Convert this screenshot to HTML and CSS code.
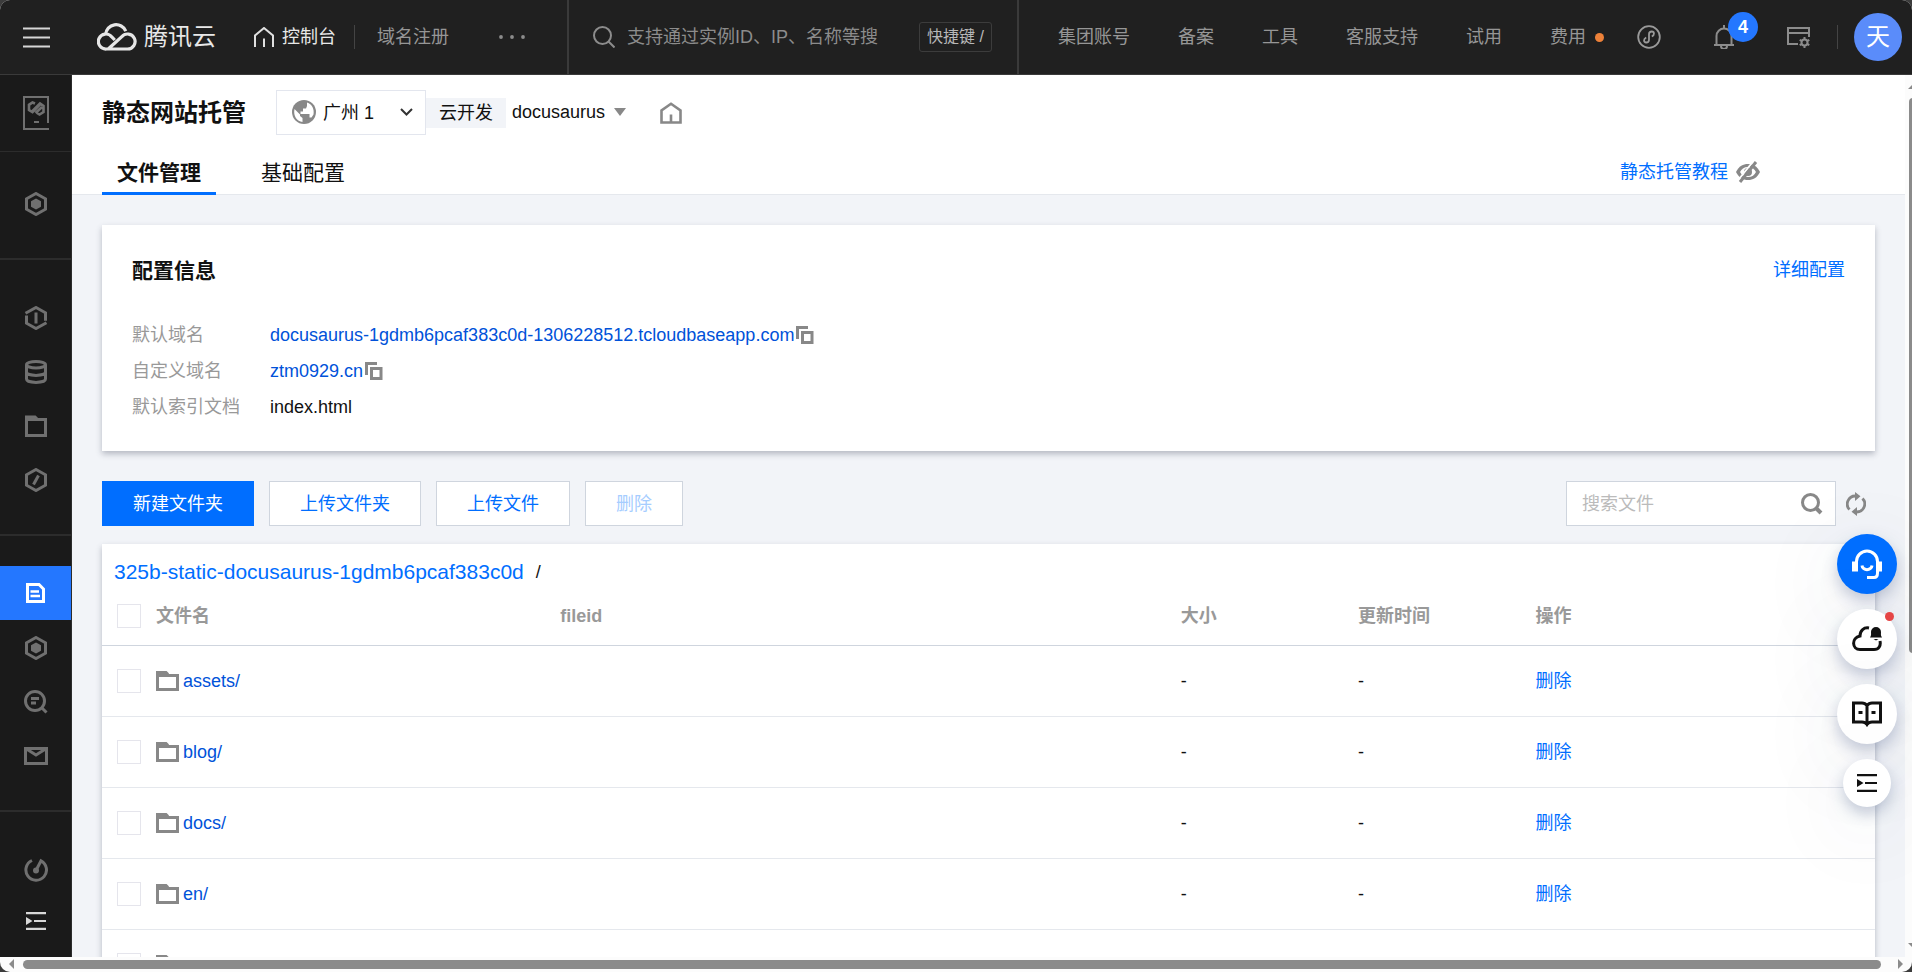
FILE: index.html
```html
<!DOCTYPE html>
<html lang="zh-CN">
<head>
<meta charset="utf-8">
<meta name="viewport" content="width=device-width, initial-scale=1">
<title>静态网站托管</title>
<link rel="stylesheet" href="styles.css">
</head>
<body>
<svg class="defs" aria-hidden="true">
  <symbol id="i-folder" viewBox="0 0 23 20"><path d="M1.500 18.500V3.500M0 1.500h10l2 2M0 3.500h11M1.500 4.500H21.500V18.500H1.500Z" fill="none" stroke="currentColor" stroke-width="3"/></symbol>
  <symbol id="i-copy" viewBox="0 0 18 18"><path d="M1.500 13V1.500H12" fill="none" stroke="currentColor" stroke-width="3"/><path d="M6.500 6.500H16V16.500H6.500Z" fill="none" stroke="currentColor" stroke-width="3"/></symbol>
  <symbol id="i-hex" viewBox="0 0 24 24"><path d="M12 1.500L21.500 6.800V17.200L12 22.500L2.500 17.200V6.800Z" fill="none" stroke="currentColor" stroke-width="3"/><path d="M12 6.500L17 9.300V14.700L12 17.500L7 14.700V9.300Z" fill="currentColor"/></symbol>
  <symbol id="i-list" viewBox="0 0 20 18"><path d="M0 1.200H20M8 9H20M0 16.800H20" fill="none" stroke="currentColor" stroke-width="2.200"/><path d="M0 5V13L6.500 9Z" fill="currentColor"/></symbol>
</svg>
<div class="window">
  <header class="topbar">
    <div class="topbar-left">
      <button class="icon-btn menu" aria-label="菜单"><svg width="27" height="21" viewBox="0 0 27 21"><path d="M0 1.500H27M0 10.500H27M0 19.500H27" stroke="#d6d6d6" stroke-width="2" fill="none"/></svg></button>
      <a class="brand" href="#">
        <svg width="40" height="28" viewBox="0 0 40 28" fill="none" stroke="#e6e6e6" stroke-width="3.200"><path d="M8.600 11.500A10.500 10.500 0 0 1 28.800 8.200"/><path d="M17.800 17L14.800 13.900A7.500 7.500 0 1 0 9.500 26H30.500A7.500 7.500 0 1 0 24.800 13.700L11.500 25.800"/></svg>
        <span>腾讯云</span>
      </a>
      <a class="console" href="#">
        <svg width="20" height="20" viewBox="0 0 20 20" fill="none" stroke="#e0e0e0" stroke-width="2"><path d="M1 20V8.500L10 1L19 8.500V20M10 11.500V20"/></svg>
        <span>控制台</span>
      </a>
      <i class="sep"></i>
      <a class="domain" href="#">域名注册</a>
      <button class="icon-btn more" aria-label="更多"><svg width="26" height="4" viewBox="0 0 26 4" fill="#8c8c8c"><circle cx="2" cy="2" r="1.900"/><circle cx="13" cy="2" r="1.900"/><circle cx="24" cy="2" r="1.900"/></svg></button>
    </div>
    <label class="topsearch">
      <svg width="22" height="22" viewBox="0 0 22 22" fill="none" stroke="#8c8c8c" stroke-width="2"><circle cx="9.500" cy="9.500" r="8.500"/><path d="M15.500 15.500L21.500 21.500"/></svg>
      <input type="text" aria-label="搜索" placeholder="支持通过实例ID、IP、名称等搜">
      <kbd>快捷键 /</kbd>
    </label>
    <nav class="topbar-right">
      <a href="#">集团账号</a><a href="#">备案</a><a href="#">工具</a><a href="#">客服支持</a><a href="#">试用</a>
      <a href="#" class="fee">费用<i></i></a>
      <div class="tools">
        <button class="icon-btn" aria-label="小程序"><svg width="24" height="24" viewBox="0 0 24 24" fill="none" stroke="#9a9a9a" stroke-width="1.800"><circle cx="12" cy="12" r="10.800"/><path d="M14.800 11.500C17.800 10 17.500 6.500 14.800 6.500C13 6.500 12 7.800 12 9.300V14.700C12 16.300 11 17.500 9.200 17.500C6.500 17.500 6.200 14 9.200 12.500"/></svg></button>
        <button class="icon-btn bell" aria-label="消息"><svg width="24" height="24" viewBox="0 0 24 24" fill="none" stroke="#8c8c8c" stroke-width="2"><path d="M2 20H22M4.500 20V11A7.500 7.500 0 0 1 19.500 11V20M12 0V4M9 21A3 3 0 0 0 15 21"/></svg><span class="badge">4</span></button>
        <button class="icon-btn" aria-label="设置"><svg width="24" height="24" viewBox="0 0 24 24" fill="none" stroke="#8c8c8c" stroke-width="2"><path d="M11 19H1V3H22V12M1 8H22"/><path d="M17.500 12V14M17.500 21V23M12.700 14.800L14.500 15.800M20.500 19.200L22.300 20.200M12.700 20.200L14.500 19.200M20.500 15.800L22.300 14.800"/><circle cx="17.500" cy="17.500" r="3"/></svg></button>
        <i class="sep"></i>
        <button class="avatar" aria-label="账号">天</button>
      </div>
    </nav>
  </header>
  <div class="body">
    <nav class="sidebar" aria-label="导航">
      <div class="group g-product">
        <a class="item" href="#" aria-label="云开发"><svg width="26" height="34" viewBox="0 0 26 34" fill="none" stroke="currentColor" stroke-width="2"><path d="M25 27V1H1V33H26M11 26H16"/><path d="M12 7.500L9.500 6.500L6 8.800V14L9.500 16.200L17 8.500M14 17L16.500 18.500L20.500 16V10L17 7.500L9.500 15M12.500 17L19 11" stroke-width="2.600"/></svg></a>
      </div>
      <div class="group g-home"><a class="item" href="#" aria-label="概览"><svg width="24" height="24"><use href="#i-hex"/></svg></a></div>
      <div class="group g-base">
        <a class="item" href="#" aria-label="环境"><svg width="24" height="24" viewBox="0 0 24 24" fill="none" stroke="currentColor" stroke-width="3"><path d="M1.500 7.300L12 1.500L21.500 6.800V14.800M2.500 9.500V17.200L12 22.500L22.500 16.700M12 6.500V17.500"/></svg></a>
        <a class="item" href="#" aria-label="数据库"><svg width="24" height="24" viewBox="0 0 24 24" fill="none" stroke="currentColor" stroke-width="3"><ellipse cx="12" cy="4.700" rx="9.500" ry="3.200"/><path d="M2.500 5V19C2.500 23.500 21.500 23.500 21.500 19V5M2.500 12C2.500 16.500 21.500 16.500 21.500 12"/></svg></a>
        <a class="item" href="#" aria-label="存储"><svg width="24" height="24" viewBox="0 0 24 24" fill="none" stroke="currentColor" stroke-width="3"><path d="M2.500 5.500H21.500V21.500H2.500ZM1 3H11L13 5"/></svg></a>
        <a class="item" href="#" aria-label="云函数"><svg width="24" height="24" viewBox="0 0 24 24" fill="none" stroke="currentColor" stroke-width="3"><path d="M12 1.500L21.500 6.800V17.200L12 22.500L2.500 17.200V6.800Z"/><path d="M14.500 7.500L9.500 16.500"/></svg></a>
      </div>
      <div class="group g-app">
        <a class="item active" href="#" aria-label="静态网站托管" aria-current="page"><svg width="24" height="24" viewBox="0 0 24 24" fill="none" stroke="currentColor" stroke-width="3"><path d="M3.500 3.500H15L19.500 8V20.500H3.500Z"/><path d="M6.500 10.500H15M6.500 15H16" stroke-width="2.600"/></svg></a>
        <a class="item" href="#" aria-label="应用"><svg width="24" height="24"><use href="#i-hex"/></svg></a>
        <a class="item" href="#" aria-label="日志"><svg width="24" height="24" viewBox="0 0 24 24" fill="none" stroke="currentColor" stroke-width="3"><circle cx="11" cy="11" r="9.500"/><path d="M17.500 17.500L22.500 22.500M7 8.500H15M7 13H12"/></svg></a>
        <a class="item" href="#" aria-label="消息"><svg width="24" height="24" viewBox="0 0 24 24" fill="none" stroke="currentColor" stroke-width="3"><path d="M1.500 4.500H22.500V19.500H1.500ZM2.500 5L12 11L21.500 5"/></svg></a>
      </div>
      <div class="group g-foot">
        <a class="item" href="#" aria-label="用量"><svg width="24" height="24" viewBox="0 0 24 24" fill="none" stroke="currentColor" stroke-width="3"><path d="M8 2.500A10.300 10.300 0 1 0 17 2.800L12 12.500"/><circle cx="12" cy="12.500" r="1.500"/></svg></a>
        <button class="item light" aria-label="展开"><svg width="20" height="18"><use href="#i-list"/></svg></button>
      </div>
    </nav>
    <main class="content">
      <div class="page-head">
        <div class="title-row">
          <h1>静态网站托管</h1>
          <div class="region">
            <svg class="globe" width="24" height="24" viewBox="0 0 24 24"><circle cx="12" cy="12" r="12" fill="#888"/><path d="M2.500 9L8 14.500V16L10.500 18V22C5 21.500 1 16 2.500 9ZM15 2.500C20 4 22.500 9 21.500 14.500L19.500 17.500H17.500V14H8.500V11.500H11V8.500H14L15 6Z" fill="#fff"/></svg>
            <select aria-label="地域"><option>广州 1</option></select>
            <svg class="chev" width="13" height="8" viewBox="0 0 13 8"><path d="M1 1L6.500 6.500L12 1" fill="none" stroke="#333" stroke-width="2"/></svg>
          </div>
          <span class="tag">云开发</span>
          <div class="env">
            <select aria-label="环境"><option>docusaurus</option></select>
            <svg width="12" height="8" viewBox="0 0 12 8"><path d="M0 0H12L6 8Z" fill="#888"/></svg>
          </div>
          <a class="home" href="#" aria-label="首页"><svg width="22" height="22" viewBox="0 0 22 22" fill="none" stroke="#888" stroke-width="2.600"><path d="M1.500 20V8.500L11 1.800L20.500 8.500V20.500H1.500ZM11 12.500V20"/></svg></a>
        </div>
        <div class="tab-row">
          <div class="tabs"><a class="tab on" href="#">文件管理</a><a class="tab" href="#">基础配置</a></div>
          <a class="guide" href="#">静态托管教程<svg width="24" height="24" viewBox="0 0 24 24"><path d="M0 12C3 6 7 4 12 4S21 6 24 12C21 18 17 20 12 20S3 18 0 12Z" fill="#888"/><path d="M4 12C5.500 9 8 7 12 7S18.500 9 20 12C18.500 15 16 17 12 17S5.500 15 4 12Z" fill="#fff"/><circle cx="12" cy="12" r="4" fill="#888"/><path d="M17.500 1L1.500 21" stroke="#fff" stroke-width="2"/><path d="M20 2L4 22" stroke="#888" stroke-width="3"/></svg></a>
        </div>
      </div>
      <div class="scroll">
        <section class="card">
          <div class="card-head"><h2>配置信息</h2><a href="#">详细配置</a></div>
          <dl class="info">
            <dt>默认域名</dt><dd><a href="#">docusaurus-1gdmb6pcaf383c0d-1306228512.tcloudbaseapp.com</a><button class="icon-btn" aria-label="复制"><svg width="18" height="18"><use href="#i-copy"/></svg></button></dd>
            <dt>自定义域名</dt><dd><a href="#">ztm0929.cn</a><button class="icon-btn" aria-label="复制"><svg width="18" height="18"><use href="#i-copy"/></svg></button></dd>
            <dt>默认索引文档</dt><dd>index.html</dd>
          </dl>
        </section>
        <div class="actions">
          <button class="btn primary">新建文件夹</button>
          <button class="btn">上传文件夹</button>
          <button class="btn">上传文件</button>
          <button class="btn" disabled>删除</button>
          <label class="filter">
            <input type="text" aria-label="搜索文件" placeholder="搜索文件">
            <svg width="22" height="22" viewBox="0 0 22 22" fill="none" stroke="#888" stroke-width="3"><circle cx="9.500" cy="9.500" r="8"/><path d="M15 15L20 20" stroke-width="4"/></svg>
          </label>
          <button class="icon-btn refresh" aria-label="刷新"><svg width="20" height="24" viewBox="0 0 20 24"><path d="M3.500 17.500A8 8 0 0 1 9.500 4M16.500 6.500A8 8 0 0 1 10.500 20" fill="none" stroke="#888" stroke-width="2.800"/><path d="M9 0L14.500 4.300L9 9ZM11 15L5.500 19.700L11 24Z" fill="#888"/></svg></button>
        </div>
        <section class="files">
          <div class="crumb"><a href="#">325b-static-docusaurus-1gdmb6pcaf383c0d</a><span>/</span></div>
          <table>
            <colgroup><col class="c-check"><col><col class="c-id"><col class="c-size"><col class="c-time"><col class="c-op"></colgroup>
            <thead><tr><th><input type="checkbox" aria-label="全选"></th><th>文件名</th><th>fileid</th><th>大小</th><th>更新时间</th><th>操作</th></tr></thead>
            <tbody>
              <tr><td><input type="checkbox" aria-label="assets/"></td><td><a class="name" href="#"><svg width="23" height="20"><use href="#i-folder"/></svg>assets/</a></td><td></td><td>-</td><td>-</td><td><a class="del" href="#">删除</a></td></tr>
              <tr><td><input type="checkbox" aria-label="blog/"></td><td><a class="name" href="#"><svg width="23" height="20"><use href="#i-folder"/></svg>blog/</a></td><td></td><td>-</td><td>-</td><td><a class="del" href="#">删除</a></td></tr>
              <tr><td><input type="checkbox" aria-label="docs/"></td><td><a class="name" href="#"><svg width="23" height="20"><use href="#i-folder"/></svg>docs/</a></td><td></td><td>-</td><td>-</td><td><a class="del" href="#">删除</a></td></tr>
              <tr><td><input type="checkbox" aria-label="en/"></td><td><a class="name" href="#"><svg width="23" height="20"><use href="#i-folder"/></svg>en/</a></td><td></td><td>-</td><td>-</td><td><a class="del" href="#">删除</a></td></tr>
              <tr><td><input type="checkbox" aria-label="文件夹"></td><td><a class="name" href="#" aria-label="文件夹"><svg width="23" height="20"><use href="#i-folder"/></svg></a></td><td></td><td></td><td></td><td></td></tr>
            </tbody>
          </table>
        </section>
      </div>
    </main>
    <div class="vbar" aria-hidden="true"><i class="up"></i><i class="thumb"></i><i class="down"></i></div>
    <div class="floaters">
      <button class="fab blue" aria-label="客服"><svg width="30" height="30" viewBox="0 0 30 30" fill="none" stroke="#fff" stroke-width="3"><path d="M4.500 22V12.500A10.500 10.500 0 0 1 25.500 12.500V24C25.500 27 24.500 28.500 22 28.500H15"/><path d="M10 16.500C10.500 22 19.500 22 20 16.500"/><path d="M0 12.500H6V22.500H0ZM24 12.500H30V22.500H24Z" fill="#fff" stroke="none"/></svg></button>
      <button class="fab" aria-label="通知"><svg width="30" height="30" viewBox="0 0 30 30" fill="none" stroke="#111" stroke-width="3"><path d="M17 4C12 3 8 6.500 8 12C-1 14 0 25.500 8 25.500H22C27 25.500 29 21.500 28 17"/><path d="M18 13.500C19.500 11.500 19 10 19 8A5 5 0 0 1 29 8C29 10 28.500 11.500 30 13.500ZM21.500 15H26.500L24 16.500Z" fill="#111" stroke="none"/></svg><i class="dot"></i></button>
      <button class="fab" aria-label="文档"><svg width="30" height="26" viewBox="0 0 30 26" fill="none" stroke="#111" stroke-width="3"><path d="M15 4.500C13.500 2.500 12 2 10 2H1.500V21H10C12.500 21 14 22 15 23.500C16 22 17.500 21 20 21H28.500V2H20C18 2 16.500 2.500 15 4.500V23M6.500 11.500H10.500M19.500 11.500H23.500"/></svg></button>
      <button class="fab small" aria-label="收起"><svg width="20" height="18"><use href="#i-list"/></svg></button>
    </div>
  </div>
  <div class="hbar" aria-hidden="true"><i class="left"></i><i class="thumb"></i><i class="right"></i></div>
</div>
</body>
</html>
```
FILE: styles.css
```css
* { box-sizing: border-box; }
body {
  margin: 0;
  background: #3c3c3c;
  color: #111;
  font: 18px/24px "Liberation Sans", "Noto Sans CJK SC", sans-serif;
}
a { color: #006eff; text-decoration: none; }
button, input, select { font: inherit; color: inherit; }
svg { display: block; flex: none; }
h1, h2, dl, dd { margin: 0; }
.defs { position: absolute; width: 0; height: 0; }
.icon-btn { display: block; padding: 0; border: 0; background: none; cursor: pointer; }
.window {
  display: flex;
  flex-direction: column;
  height: 100vh;
  overflow: hidden;
  border-radius: 10px;
  background: #fcfcfc;
}

/* top bar */
.topbar {
  display: flex;
  flex: none;
  height: 75px;
  background: #202020;
  border-bottom: 1px solid #3a3a3a;
  color: #969696;
}
.topbar a { color: inherit; white-space: nowrap; }
.topbar-left { display: flex; align-items: center; padding: 0 42px 0 23px; }
.brand { display: flex; align-items: center; gap: 7px; margin-left: 47px; font-size: 24px; }
.topbar .brand, .topbar .console { color: #e8e8e8; }
.console { display: flex; align-items: center; gap: 8px; margin: 0 18px 0 38px; }
.sep { width: 1px; height: 24px; background: #444; }
.domain { margin: 0 50px 0 22px; }
.topsearch {
  display: flex;
  flex: 1;
  align-items: center;
  min-width: 0;
  padding: 0 25px 0 24px;
  border: solid #3a3a3a;
  border-width: 0 2px;
}
.topsearch input {
  flex: 1;
  min-width: 0;
  margin: 0 12px;
  padding: 0;
  border: 0;
  outline: 0;
  background: none;
}
.topsearch input::placeholder { color: #8c8c8c; opacity: 1; }
kbd {
  flex: none;
  padding: 2px 7px;
  border: 1px solid #3c3c3c;
  border-radius: 3px;
  color: #b8b8b8;
  font: 16px/24px "Liberation Sans", "Noto Sans CJK SC", sans-serif;
}
.topbar-right { display: flex; flex: none; align-items: center; gap: 48px; padding: 0 10px 0 39px; }
.fee { display: flex; align-items: center; gap: 9px; }
.fee i { width: 9px; height: 9px; border-radius: 50%; background: #ed8139; }
.tools { display: flex; align-items: center; gap: 16px; margin-left: -15px; }
.tools .icon-btn { margin-right: 35px; }
.tools .icon-btn:nth-of-type(3) { margin-right: 10px; }
.bell { position: relative; }
.badge {
  position: absolute;
  top: -13px;
  left: 16px;
  width: 30px;
  border-radius: 15px;
  background: #2477ff;
  color: #fff;
  font: bold 18px/30px "Liberation Sans", sans-serif;
}
.avatar {
  width: 48px;
  height: 48px;
  padding: 0;
  border: 0;
  border-radius: 50%;
  background: #5a8cfa;
  color: #fff;
  font-size: 24px;
}

/* sidebar */
.body { position: relative; display: flex; flex: 1; min-height: 0; }
.sidebar {
  flex: none;
  width: 72px;
  overflow: hidden;
  background: #1a1a1a;
  border-right: 1px solid #2c2c2c;
  color: #707070;
}
.group { border-bottom: 2px solid #2c2c2c; }
.item {
  display: flex;
  align-items: center;
  justify-content: center;
  width: 100%;
  height: 54px;
  padding: 0;
  border: 0;
  background: none;
  color: inherit;
}
.g-product { padding: 11px 0; border-bottom-width: 1px; }
.g-home { padding: 25px 0 27px; }
.g-base { padding: 31px 0 27px; }
.g-app { padding: 30px 0 27px; }
.g-app .active { margin-bottom: 1px; }
.g-foot { padding: 32px 0; border: 0; }
.g-foot .item { height: 51px; }
.item.active { background: #2477ff; color: #fff; }
.item.light { color: #d8d8d8; }

/* page head */
.content { display: flex; flex: 1; flex-direction: column; min-width: 0; background: #f2f4f8; }
.page-head { flex: none; padding: 15px 30px 0; background: #fff; border-bottom: 1px solid #e5e8ed; }
.title-row { display: flex; align-items: center; height: 45px; }
h1 { font-size: 24px; line-height: 30px; white-space: nowrap; }
.region { position: relative; align-self: stretch; width: 150px; margin-left: 30px; }
.region select {
  width: 100%;
  height: 100%;
  padding: 0 0 0 46px;
  border: 1px solid #e3e6ee;
  border-radius: 0;
  background: none;
  appearance: none;
}
.globe { position: absolute; top: 10px; left: 16px; }
.chev { position: absolute; top: 18px; right: 13px; pointer-events: none; }
.tag { padding: 3px 13px; background: #f2f4f8; }
.env { display: flex; align-items: center; gap: 8px; padding: 0 0 2px 6px; }
.env select { padding: 0; border: 0; background: none; appearance: none; }
.home { margin-left: 34px; }
.tab-row { display: flex; align-items: flex-end; justify-content: space-between; padding-right: 115px; }
.tabs { display: flex; gap: 30px; margin-bottom: -1px; }
.tab {
  height: 60px;
  padding: 0 15px;
  border-bottom: 3px solid transparent;
  color: #111;
  font-size: 21px;
  line-height: 75px;
}
.tab.on { border-color: #006eff; font-weight: bold; }
.guide { display: flex; align-items: center; gap: 8px; padding-bottom: 10px; }

/* content */
.scroll { flex: 1; min-height: 0; overflow: hidden; padding: 30px; }
.card, .files { background: #fff; box-shadow: 0 3px 6px rgba(54, 58, 80, .32); }
.card { padding: 30px 30px 26px; }
.card-head { display: flex; justify-content: space-between; align-items: center; height: 30px; }
h2 { font-size: 21px; line-height: 32px; padding-top: 2px; }
.info { display: grid; grid-template-columns: 138px 1fr; padding-top: 32px; line-height: 36px; }
dt { color: #999; }
dd { display: flex; align-items: center; gap: 2px; color: #111; }
dd a, .name { color: #0052d9; }
dd .icon-btn { color: #888; }
.actions { display: flex; align-items: center; gap: 15px; padding: 30px 9px 18px 0; }
.btn {
  height: 45px;
  padding: 0 30px;
  border: 1px solid #cfd5de;
  background: #fff;
  color: #006eff;
}
.btn.primary { border-color: #006eff; background: #006eff; color: #fff; }
.btn:disabled { color: #a6cdff; }
.filter {
  display: flex;
  align-items: center;
  width: 270px;
  height: 45px;
  margin-left: auto;
  padding: 0 12px 0 15px;
  border: 1px solid #cfd5de;
  background: #fff;
}
.filter input { flex: 1; min-width: 0; padding: 0; border: 0; outline: 0; background: none; }
.filter input::placeholder { color: #bbb; opacity: 1; }
.refresh { margin-left: -5px; }
.crumb { display: flex; align-items: center; gap: 12px; padding: 16px 12px 0; font-size: 21px; }
.crumb span { font-size: 18px; }
table { width: 100%; border-collapse: collapse; table-layout: fixed; }
.c-check { width: 39px; }
.c-id { width: 35%; }
.c-size, .c-time { width: 10%; }
.c-op { width: 20%; }
th, td { height: 71px; padding: 0 0 0 15px; border-bottom: 1px solid #e5e8ed; text-align: left; }
th { height: 61px; padding-top: 4px; border-color: #cfd5de; color: #999; }
input[type="checkbox"] {
  display: block;
  width: 24px;
  height: 24px;
  margin: 0;
  border: 1px solid #e5e5ec;
  background: #fff;
  appearance: none;
}
.name { display: flex; align-items: center; gap: 4px; }
.name svg { color: #888; }

/* floating buttons */
.floaters {
  position: absolute;
  top: 459px;
  right: 15px;
  display: flex;
  flex-direction: column;
  align-items: center;
  gap: 15px;
}
.fab {
  position: relative;
  display: flex;
  align-items: center;
  justify-content: center;
  width: 60px;
  height: 60px;
  padding: 0;
  border: 0;
  border-radius: 50%;
  background: #fff;
  color: #111;
  box-shadow: 0 7px 15px rgba(55, 75, 125, .28), 0 20px 90px rgba(55, 75, 100, .12);
}
.fab.blue { background: #006eff; }
.fab.small { width: 48px; height: 48px; }
.dot {
  position: absolute;
  top: 3px;
  right: 3px;
  width: 9px;
  height: 9px;
  border-radius: 50%;
  background: #e54545;
}

/* scroll bars */
.vbar { display: flex; flex: none; flex-direction: column; width: 7px; padding: 9px 0; overflow: hidden; }
.vbar .thumb { width: 8px; height: 555px; margin: 9px 0 0 4px; border-radius: 4px; background: #8b8b8b; }
.up, .down { margin-left: 3px; border: solid transparent; border-width: 0 5px; }
.up { border-bottom: 5px solid #8b8b8b; }
.down { margin-top: auto; border-top: 5px solid #8b8b8b; }
.hbar { display: flex; flex: none; align-items: center; gap: 9px; height: 15px; padding: 0 9px 1px; }
.hbar .thumb { flex: 1; height: 9px; margin-right: 8px; border-radius: 5px; background: #8b8b8b; }
.left, .right { border: solid transparent; border-width: 5px 0; }
.left { border-right: 5px solid #8b8b8b; }
.right { border-left: 5px solid #8b8b8b; }
```
